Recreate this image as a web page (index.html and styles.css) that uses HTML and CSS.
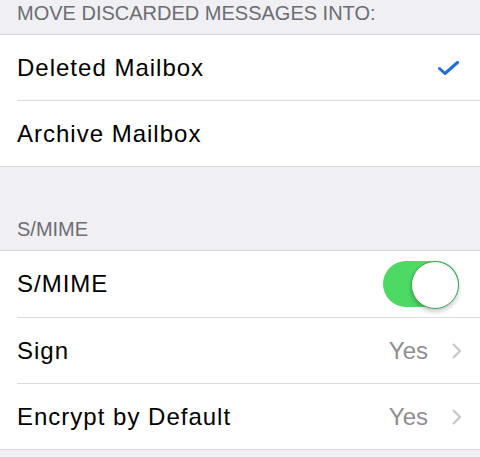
FILE: index.html
```html
<!DOCTYPE html>
<html lang="en">

<head>
    <meta charset="UTF-8">
    <meta name="viewport" content="width=device-width, initial-scale=1.0">
    <title>Mail Settings</title>
    <link rel="stylesheet" href="styles.css">
</head>

<body>
    <div class="settings">
        <div class="groupTitle">MOVE DISCARDED MESSAGES INTO:</div>
        <ul class="group">
            <li class="cell">
                <span class="label">Deleted Mailbox</span>
                <svg class="check" width="21" height="14" viewBox="0 0 21 14">
                    <path d="M1.5 7.5 L7 12.5 L19.5 1.5" fill="none" stroke="#1f6fdc" stroke-width="3" stroke-linecap="round" stroke-linejoin="round" />
                </svg>
            </li>
            <li class="cell"><span class="label">Archive Mailbox</span></li>
        </ul>

        <div class="groupTitle spaced">S/MIME</div>
        <ul class="group">
            <li class="cell tall">
                <span class="label">S/MIME</span>
                <span class="toggle on"></span>
            </li>
            <li class="cell">
                <span class="label">Sign</span>
                <span class="value">Yes</span>
                <svg class="chevron" width="10" height="16" viewBox="0 0 10 16">
                    <path d="M1.5 1.5 L8 8 L1.5 14.5" fill="none" stroke="#c4c4c9" stroke-width="2" stroke-linecap="round" stroke-linejoin="round" />
                </svg>
            </li>
            <li class="cell">
                <span class="label">Encrypt by Default</span>
                <span class="value">Yes</span>
                <svg class="chevron" width="10" height="16" viewBox="0 0 10 16">
                    <path d="M1.5 1.5 L8 8 L1.5 14.5" fill="none" stroke="#c4c4c9" stroke-width="2" stroke-linecap="round" stroke-linejoin="round" />
                </svg>
            </li>
        </ul>
    </div>
</body>

</html>
```

FILE: styles.css
```css
* {
    box-sizing: border-box;
}

body {
    margin: 0;
    background: #efeff4;
    font-family: "Liberation Sans", Arial, sans-serif;
}

.groupTitle {
    padding: 0 17px 8px;
    line-height: 26px;
    font-size: 20px;
    color: #6d6d72;
}

.groupTitle.spaced {
    padding-top: 49px;
}

.group {
    list-style: none;
    margin: 0;
    padding: 0 0 0 17px;
    background: #fff;
    border-top: 1px solid #d8d8dc;
    border-bottom: 1px solid #d8d8dc;
}

.cell {
    display: flex;
    align-items: center;
    height: 65px;
    padding-right: 18px;
    font-size: 24px;
    color: #000;
    box-sizing: content-box;
}

.cell.tall {
    height: 66px;
}

.cell + .cell {
    border-top: 1px solid #dcdce0;
}

.label {
    flex: 1;
    letter-spacing: 1px;
}

.check {
    margin-right: 3px;
}

.value {
    color: #8e8e93;
    margin-right: 24px;
}

.chevron {
    margin-top: 1px;
}

.toggle {
    position: relative;
    width: 76px;
    height: 46px;
    margin-right: 3px;
    border-radius: 23px;
    background: #4cd964;
}

.toggle::after {
    content: "";
    position: absolute;
    top: 0;
    right: 0;
    width: 46px;
    height: 46px;
    border-radius: 50%;
    background: #fff;
    border: 1px solid #3fa45a;
    box-shadow: 0 3px 4px rgba(0, 0, 0, 0.2);
}
```
